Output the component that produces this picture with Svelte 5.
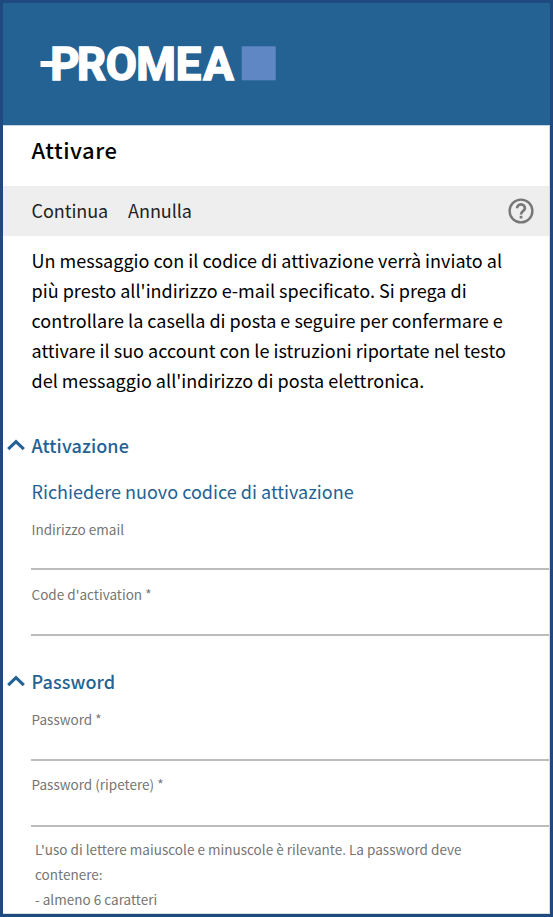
<script>
  const rules = ["L'uso di lettere maiuscole e minuscole è rilevante. La password deve", 'contenere:', '- almeno 6 caratteri'];
  const intro = [
    'Un messaggio con il codice di attivazione verrà inviato al',
    "più presto all'indirizzo e-mail specificato. Si prega di",
    'controllare la casella di posta e seguire per confermare e',
    'attivare il suo account con le istruzioni riportate nel testo',
    "del messaggio all'indirizzo di posta elettronica."
  ];
</script>

{#snippet section(title)}
  <h2>
    <svg width="18" height="12" viewBox="0 0 18 12" aria-hidden="true">
      <path d="M1.2 10.2 9 2.6l7.8 7.6" fill="none" stroke="#246294" stroke-width="3.1" />
    </svg>
    <span>{title}</span>
  </h2>
{/snippet}

{#snippet field(label)}
  <label class="field">
    <span>{label}</span>
    <input type="text" />
  </label>
{/snippet}

<div class="window">
  <header>
    <svg width="240" height="40" viewBox="0 0 240 40" role="img" aria-label="Promea">
      <rect x="2.5" y="19" width="14" height="6" fill="#fff" />
      <text transform="translate(0 37.8) scale(0.975 1)" x="12.5 40.1 69.4 100.7 141.4 169.6">PROMEA</text>
      <rect x="203.7" y="4.3" width="34" height="34" fill="#5e87c3" />
    </svg>
  </header>
  <h1>Attivare</h1>
  <nav>
    <button>Continua</button>
    <button>Annulla</button>
    <svg class="help" width="26" height="26" viewBox="0 0 26 26" aria-label="?">
      <circle cx="13" cy="13" r="11.4" fill="none" stroke="#777" stroke-width="2.4" />
      <path d="M9.1 10.3a3.9 3.9 0 1 1 7.8 0c0 2.6-3.9 3-3.9 6.2" fill="none" stroke="#777" stroke-width="2.7" />
      <rect x="11.7" y="17.8" width="2.7" height="2.7" fill="#777" />
    </svg>
  </nav>
  <p class="intro">{#each intro as line}<span>{line}</span>{/each}</p>
  <section>
    {@render section('Attivazione')}
    <a href="#code">Richiedere nuovo codice di attivazione</a>
    {@render field('Indirizzo email')}
    {@render field("Code d'activation *")}
  </section>
  <section class="password">
    {@render section('Password')}
    {@render field('Password *')}
    {@render field('Password (ripetere) *')}
    <p class="rules">{#each rules as line}<span>{line}</span>{/each}</p>
  </section>
</div>

<style>
  .window {
    box-sizing: border-box;
    width: 553px;
    height: 917px;
    overflow: hidden;
    border: 3px solid #1e4a80;
    box-shadow: inset -1px -1px 0 #d9dde0;
    background: #fff;
    font: 18px/30px 'Noto Sans CJK SC', 'Noto Sans', sans-serif;
    letter-spacing: 0.02px;
    color: #000;
  }
  header {
    height: 122px;
    box-sizing: border-box;
    padding: 39px 0 0 35px;
    background: #246294;
    box-shadow: 0 1px 0 #c5d4e0;
  }
  header svg { display: block; overflow: visible; }
  header text {
    font: 700 46.4px Roboto, sans-serif;
    letter-spacing: 0;
    fill: #fff;
    stroke: #fff;
    stroke-width: 1.7px;
  }
  h1 {
    height: 61px;
    margin: 0;
    padding: 9px 0 0 28.5px;
    box-sizing: border-box;
    font-size: 22px;
    line-height: 30px;
    font-weight: 500;
    letter-spacing: 0.5px;
  }
  nav {
    display: flex;
    align-items: center;
    gap: 20px;
    height: 50px;
    margin-right: 1px;
    padding: 0 15px 0 28.5px;
    background: #eee;
  }
  button {
    padding: 0 0 2px;
    border: 0;
    background: none;
    font: inherit;
    letter-spacing: -0.07px;
    color: #222;
  }
  .help { margin-left: auto; }
  .intro { margin: 9px 0 0 28.5px; }
  .intro span, .rules span { display: block; white-space: nowrap; }
  section { margin-top: 35px; }
  h2 {
    display: flex;
    align-items: center;
    gap: 6.5px;
    height: 30px;
    margin: 0;
    padding-left: 4px;
    font-size: 18px;
    font-weight: 500;
    letter-spacing: 0.12px;
    color: #246294;
  }
  a {
    display: block;
    margin: 16px 0 12px 28.5px;
    color: #246294;
    text-decoration: none;
  }
  .field {
    display: flex;
    flex-direction: column;
    height: 65px;
    margin-left: 28px;
    margin-right: 1px;
    font-size: 13.5px;
    line-height: 22px;
    color: #757575;
  }
  .field span { padding-left: 0.5px; }
  .field + .field { height: 66px; }
  .field + .field input { height: 31px; }
  input {
    height: 30px;
    box-sizing: border-box;
    padding: 0;
    border: 0;
    border-bottom: 2px solid #bcbcbc;
    outline: 0;
    background: none;
  }
  .password { margin-top: 17px; }
  .password h2 { margin-bottom: 12px; }
  .password .field input { height: 31px; }
  .password .field + .field input { height: 32px; }
  .rules {
    margin: -2px 0 0 32px;
    font-size: 13.5px;
    line-height: 25px;
    color: #757575;
  }
</style>
